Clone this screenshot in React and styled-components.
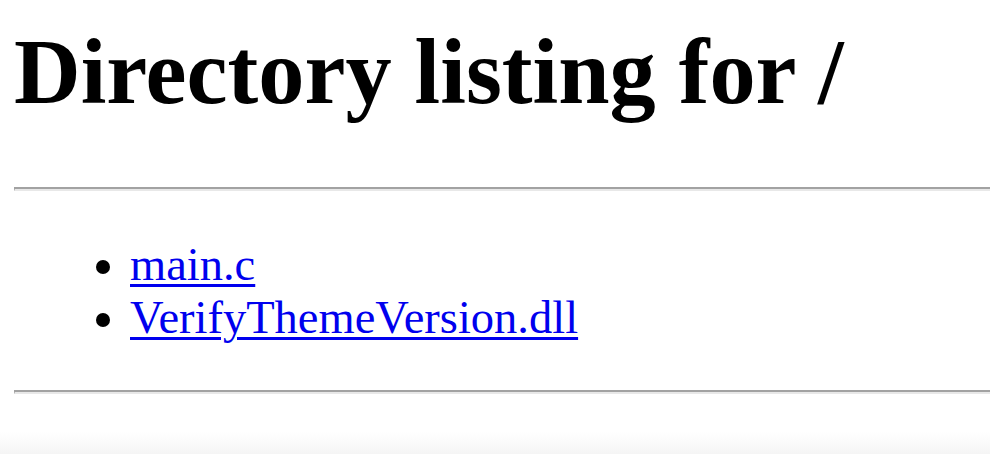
import React from "react";
import styled, { createGlobalStyle } from "styled-components";

const Global = createGlobalStyle`
  html {
    background: linear-gradient(to bottom, #ffffff 0, #ffffff 432px, #f5f5f5 454px);
    min-height: 100%;
  }
  body {
    margin: 0;
    font-family: "Liberation Serif", "Times New Roman", serif;
    color: #000;
  }
`;

const Page = styled.main`
  padding: 20px 0 0 14px;
`;

const Title = styled.h1`
  margin: 0 0 62px 0;
  font-size: 92.3px;
  font-weight: bold;
  line-height: 105px;
  white-space: nowrap;
`;

const Rule = styled.hr`
  margin: 0;
  height: 0;
  border: none;
  border-top: 2px solid #a2a2a2;
  border-left: 1px solid #a2a2a2;
  border-bottom: 2px solid #e8e8e8;
`;

const List = styled.ul`
  margin: 47px 0 46px 0;
  padding-left: 116px;
  font-size: 46.5px;
  line-height: 53px;
`;

const Item = styled.li`
  list-style: disc;
`;

const FileLink = styled.a`
  color: #0000ee;
  text-decoration: underline;
  text-decoration-thickness: 3px;
  text-underline-offset: 4px;
`;

const files = ["main.c", "VerifyThemeVersion.dll"];

export default function App() {
  return (
    <>
      <Global />
      <Page>
        <Title>Directory listing for /</Title>
        <Rule />
        <List>
          {files.map((f) => (
            <Item key={f}>
              <FileLink href={f}>{f}</FileLink>
            </Item>
          ))}
        </List>
        <Rule />
      </Page>
    </>
  );
}
